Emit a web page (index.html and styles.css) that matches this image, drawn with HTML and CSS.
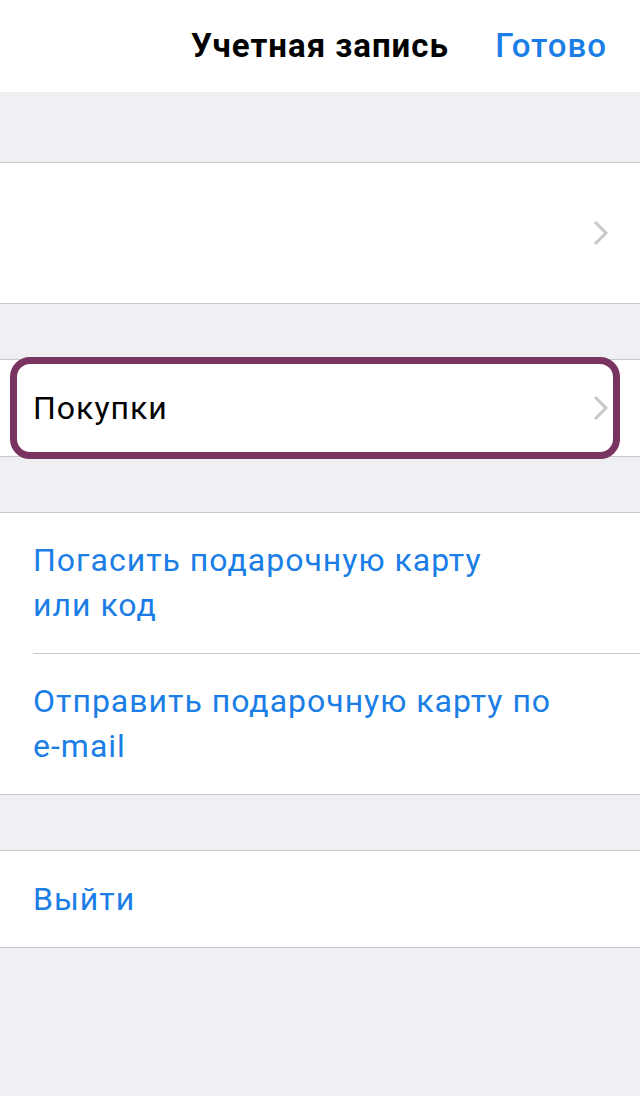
FILE: index.html
```html
<!DOCTYPE html>
<html lang="ru">
<head>
    <meta charset="UTF-8">
    <meta name="viewport" content="width=device-width, initial-scale=1.0">
    <title>Учетная запись</title>
    <link rel="stylesheet" href="styles.css">
</head>
<body>
    <header class="navbar">
        <h1>Учетная запись</h1>
        <a class="done">Готово</a>
    </header>
    <main>
        <div class="spacer first"></div>
        <section class="group">
            <div class="cell tall">
                <span class="label"></span>
                <svg class="chevron" width="16" height="26" viewBox="0 0 16 26"><path d="M2 2 L13 13 L2 24" fill="none" stroke="#c7c7cc" stroke-width="3"/></svg>
            </div>
        </section>
        <div class="spacer"></div>
        <section class="group">
            <div class="cell highlight">
                <span class="label">Покупки</span>
                <svg class="chevron" width="16" height="26" viewBox="0 0 16 26"><path d="M2 2 L13 13 L2 24" fill="none" stroke="#c7c7cc" stroke-width="3"/></svg>
            </div>
        </section>
        <div class="spacer"></div>
        <section class="group">
            <div class="cell tall">
                <span class="label link">Погасить подарочную карту<br>или код</span>
            </div>
            <div class="cell tall">
                <span class="label link">Отправить подарочную карту по<br>e-mail</span>
            </div>
        </section>
        <div class="spacer"></div>
        <section class="group">
            <div class="cell">
                <span class="label link">Выйти</span>
            </div>
        </section>
    </main>
</body>
</html>
```

FILE: styles.css
```css
body {
    margin: 0;
    padding: 0;
    font-family: Roboto, "Liberation Sans", sans-serif;
    background-color: #efeff4;
    min-height: 1096px;
}
.navbar {
    background-color: white;
    height: 92px;
    display: flex;
    align-items: center;
    justify-content: flex-end;
    position: relative;
    padding-right: 33px;
}
.navbar h1 {
    margin: 0;
    font-size: 33px;
    font-weight: 700;
    letter-spacing: 1px;
    color: #000;
    position: absolute;
    left: 0;
    right: 0;
    text-align: center;
    top: 26px;
}
.done {
    color: #1a7ee6;
    font-size: 33px;
    font-weight: 500;
    letter-spacing: 1px;
    position: relative;
    top: -1px;
}
.spacer {
    height: 55px;
}
.spacer.first {
    height: 70px;
}
.group {
    background-color: white;
    border-top: 1px solid #c8c7cc;
    border-bottom: 1px solid #c8c7cc;
}
.cell {
    height: 96px;
    margin-left: 33px;
    padding-right: 33px;
    display: flex;
    align-items: center;
    justify-content: space-between;
    position: relative;
}
.cell.tall {
    height: 140px;
}
.cell + .cell {
    border-top: 1px solid #c8c7cc;
}
.label {
    font-size: 32px;
    line-height: 45px;
    letter-spacing: 1px;
    color: #000;
}
.label.link {
    color: #1a7ee6;
}
.chevron {
    margin-right: -2px;
}
.highlight::before {
    content: "";
    position: absolute;
    left: -23px;
    right: 20px;
    top: -3px;
    bottom: -3px;
    border: 7px solid #7a3462;
    border-radius: 20px;
}
```
